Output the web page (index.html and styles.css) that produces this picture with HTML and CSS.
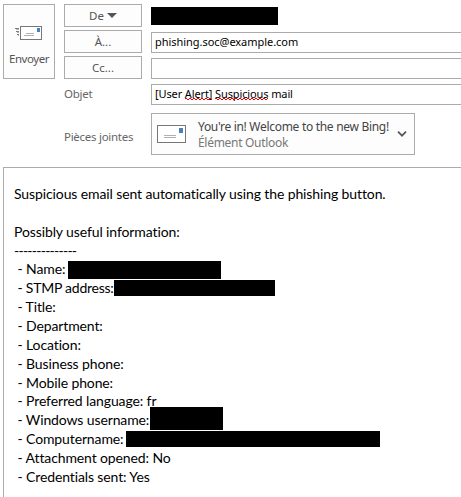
FILE: index.html
```html
<!DOCTYPE html>
<html lang="fr">
<head>
<meta charset="utf-8">
<title>Message</title>
<link rel="stylesheet" href="styles.css">
</head>
<body>
<header class="compose">
  <button class="send">
    <svg class="send-icon" width="28" height="15" viewBox="0 0 28 15">
      <path d="M0 2.5h4M1 5.5h3M2 8.5h2" stroke="#7d7d7d" stroke-width="1" fill="none"/>
      <path d="M1 3.5h3M2 6.5h2M3 9.5h1" stroke="#b5b5b5" stroke-width="1" fill="none"/>
      <rect x="5.5" y=".5" width="21" height="13" fill="#fff" stroke="#777"/>
      <rect x="22" y="2" width="3" height="4" fill="#4a80bd"/>
      <path d="M11 7.5h8M9 9.5h10" stroke="#b0b0b0"/>
    </svg>
    <span class="send-label">Envoyer</span>
  </button>
  <div class="labels">
    <button class="pick">De<i class="caret"></i></button>
    <button class="pick">À...</button>
    <button class="pick">Cc...</button>
    <span class="label subject-label">Objet</span>
    <span class="label files-label">Pièces jointes</span>
  </div>
  <div class="fields">
    <div class="sender"></div>
    <div class="field"><span class="to">phishing.soc@example.com</span></div>
    <div class="field"></div>
    <div class="field"><span class="subject">[User <span class="typo">Alert]</span> <span class="typo">Suspicious</span> mail</span></div>
    <div class="attachment">
      <svg class="mail-icon" width="29" height="18" viewBox="0 0 29 18">
        <rect x=".5" y=".5" width="28" height="17" fill="#fff" stroke="#777"/>
        <rect x="22" y="3" width="4" height="5" fill="#4a80bd"/>
        <path d="M7 10.5h12M7 12.5h12" stroke="#b0b0b0"/>
      </svg>
      <div class="file">
        <span class="file-name">You're in! Welcome to the new Bing!</span>
        <span class="file-type">Élément Outlook</span>
      </div>
      <svg class="chevron" width="10" height="6" viewBox="0 0 10 6"><path d="M1 .7l4 4 4-4" fill="none" stroke="#555" stroke-width="1.7"/></svg>
    </div>
  </div>
</header>
<main class="message">
  <p class="line">Suspicious email sent automatically using the phishing button.</p>
  <p class="line"></p>
  <p class="line">Possibly useful information:</p>
  <p class="line rule">--------------</p>
  <p class="line item">- Name:<i class="redacted r-name"></i></p>
  <p class="line item smtp">- STMP address:<i class="redacted r-smtp"></i></p>
  <p class="line item">- Title:</p>
  <p class="line item">- Department:</p>
  <p class="line item">- Location:</p>
  <p class="line item">- Business phone:</p>
  <p class="line item">- Mobile phone:</p>
  <p class="line item">- Preferred language: fr</p>
  <p class="line item">- Windows username:<i class="redacted r-user"></i></p>
  <p class="line item">- Computername:<i class="redacted r-host"></i></p>
  <p class="line item">- Attachment opened: No</p>
  <p class="line item">- Credentials sent: Yes</p>
</main>
</body>
</html>
```
FILE: styles.css
```css
* { box-sizing: border-box; }
html, body { height: 100%; }
body {
  margin: 0;
  padding: 4px 0 0 3px;
  background: #fff;
  overflow: hidden;
  display: flex;
  flex-direction: column;
  font: 12px/16px "Noto Sans", "Open Sans", sans-serif;
  color: #444;
}
button { font: inherit; color: #555; background: #fdfdfd; border: 1px solid #ababab; padding: 0; }
.compose { display: flex; align-items: flex-start; height: 163px; flex: none; }
.send {
  width: 52px; height: 75px;
  display: flex; flex-direction: column; align-items: center; justify-content: flex-start;
  padding-top: 21px;
}
.send-icon { display: block; margin-right: 1px; flex: none; }
.send-label { margin-top: 10px; font-size: 11.5px; letter-spacing: -.45px; }
.labels { width: 78px; margin-left: 9px; display: flex; flex-direction: column; }
.pick {
  height: 23px; margin-bottom: 3px;
  display: flex; align-items: center; justify-content: center;
  font-size: 11.5px;
}
.caret { margin-left: 3px; border: 5px solid transparent; border-top-color: #555; border-bottom: 0; }
.label { font-size: 11.5px; letter-spacing: -.28px; white-space: nowrap; color: #666; }
.subject-label { margin-top: 4px; }
.files-label { margin-top: 27px; }
.fields { flex: 1; margin-left: 9px; display: flex; flex-direction: column; }
.sender { width: 127px; height: 18px; margin: 3px 0 7px; background: #000; }
.field {
  height: 21px; margin-bottom: 5px; padding-left: 3px;
  border: 1px solid #ababab; border-right: 0;
  font-size: 11px; line-height: 18px; color: #000; white-space: nowrap;
}
.to { letter-spacing: -.04px; }
.subject { letter-spacing: -.12px; }
.typo { position: relative; }
.typo::after {
  content: "";
  position: absolute; left: 0; right: 0; bottom: 1px; height: 2px;
  background:
    repeating-linear-gradient(90deg, #f00000 0 2px, transparent 2px 4px) 0 0 / 100% 1px no-repeat,
    repeating-linear-gradient(90deg, transparent 0 2px, #f00000 2px 4px) 0 1px / 100% 1px no-repeat;
}
.attachment {
  width: 264px; height: 42px; margin-top: 3px; padding: 0 7px 0 5px;
  display: flex; align-items: center;
  border: 1px solid #ababab; background: #fdfdfd;
}
.mail-icon, .chevron { flex: none; }
.file { width: 199px; margin: 1px 0 0 12px; flex: 1; display: flex; flex-direction: column; white-space: nowrap; letter-spacing: -.3px; }
.file-type { color: #777; }
.message {
  flex: 1; padding: 17px 0 0 10px;
  border: 1px solid #ababab; border-right: 0; border-bottom: 0;
  font: 14px/18.87px Lato, sans-serif; color: #000; letter-spacing: -.11px;
}
.line { position: relative; margin: 0; height: 18.87px; white-space: nowrap; }
.rule { letter-spacing: -.75px; }
.item { padding-left: 3.5px; letter-spacing: -.12px; }
.smtp { letter-spacing: -.24px; }
.redacted { position: absolute; background: #000; }
.r-name { left: 54px; top: 1px; width: 153px; height: 18px; }
.r-smtp { left: 100px; top: 1px; width: 161px; height: 16px; }
.r-user { left: 136px; top: -4px; width: 73px; height: 23px; }
.r-host { left: 112px; top: 1px; width: 254px; height: 16px; }
```
